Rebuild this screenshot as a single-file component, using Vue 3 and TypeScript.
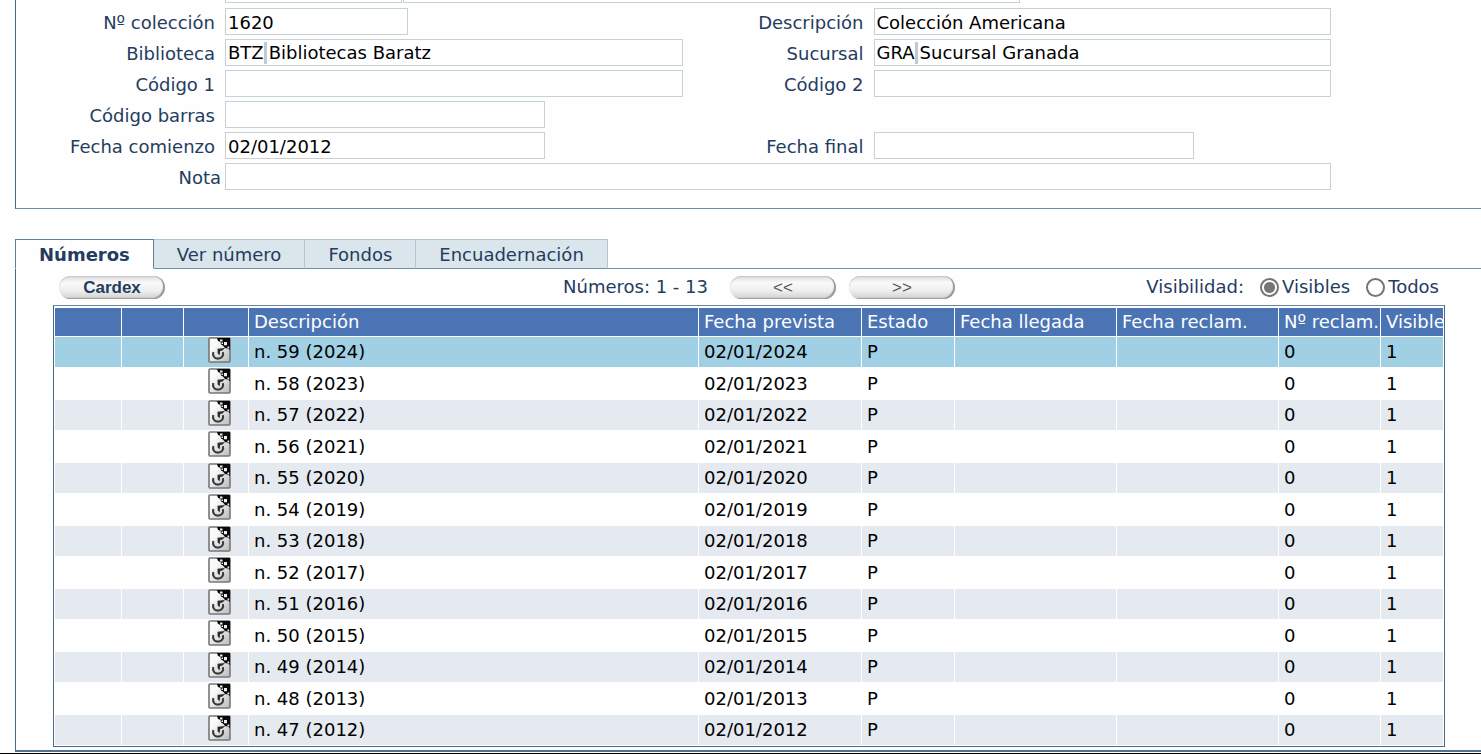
<script setup lang="ts">
import { ref } from 'vue'

interface Issue {
  id: number
  description: string
  expected: string
  status: string
  claims: number
  visible: number
}

const issues: Issue[] = Array.from({ length: 13 }, (_, i) => ({
  id: 59 - i,
  description: `n. ${59 - i} (${2024 - i})`,
  expected: `02/01/${2024 - i}`,
  status: 'P',
  claims: 0,
  visible: 1,
}))

const tabs = ['Números', 'Ver número', 'Fondos', 'Encuadernación']
const activeTab = ref('Números')
const selected = ref(59)
const visibility = ref('visibles')

const collection = ref('1620')
const description = ref('Colección Americana')
const libraryCode = ref('BTZ')
const libraryName = ref('Bibliotecas Baratz')
const branchCode = ref('GRA')
const branchName = ref('Sucursal Granada')
const code1 = ref('')
const code2 = ref('')
const barcode = ref('')
const startDate = ref('02/01/2012')
const endDate = ref('')
const note = ref('')
</script>

<template>
  <main class="page">
    <form class="panel" @submit.prevent>
      <div class="cut-row">
        <input class="cut-code" type="text" aria-label="Código de título" />
        <input class="cut-name" type="text" aria-label="Título" />
      </div>
      <div class="fields">
        <label for="collection">Nº colección</label>
        <input id="collection" v-model="collection" class="box short" type="text" />
        <label for="description">Descripción</label>
        <input id="description" v-model="description" class="box" type="text" />

        <label for="library">Biblioteca</label>
        <div class="box pair">
          <input id="library" v-model="libraryCode" class="code" type="text" />
          <input v-model="libraryName" class="name" type="text" aria-label="Nombre de biblioteca" />
        </div>
        <label for="branch">Sucursal</label>
        <div class="box pair">
          <input id="branch" v-model="branchCode" class="code" type="text" />
          <input v-model="branchName" class="name" type="text" aria-label="Nombre de sucursal" />
        </div>

        <label for="code1">Código 1</label>
        <input id="code1" v-model="code1" class="box" type="text" />
        <label for="code2">Código 2</label>
        <input id="code2" v-model="code2" class="box" type="text" />

        <label for="barcode">Código barras</label>
        <input id="barcode" v-model="barcode" class="box medium" type="text" />

        <label class="first" for="start">Fecha comienzo</label>
        <input id="start" v-model="startDate" class="box medium" type="text" />
        <label for="end">Fecha final</label>
        <input id="end" v-model="endDate" class="box medium" type="text" />

        <label class="tight" for="note">Nota</label>
        <input id="note" v-model="note" class="box wide" type="text" />
      </div>
    </form>

    <nav class="tabs" role="tablist">
      <button
        v-for="tab in tabs"
        :key="tab"
        type="button"
        role="tab"
        class="tab"
        :class="{ active: tab === activeTab }"
        :aria-selected="tab === activeTab"
        @click="activeTab = tab"
      >
        {{ tab }}
      </button>
      <span class="tabs-rest"></span>
    </nav>

    <section class="content">
      <div class="toolbar">
        <div class="side">
          <button type="button" class="pill strong">Cardex</button>
        </div>
        <div class="pager">
          <span class="range">Números: 1 - 13</span>
          <button type="button" class="pill" aria-label="Anteriores">&lt;&lt;</button>
          <button type="button" class="pill" aria-label="Siguientes">&gt;&gt;</button>
        </div>
        <div class="side visibility" role="radiogroup" aria-labelledby="vis-title">
          <span id="vis-title">Visibilidad:</span>
          <label><input v-model="visibility" type="radio" name="vis" value="visibles" />Visibles</label>
          <label><input v-model="visibility" type="radio" name="vis" value="todos" />Todos</label>
        </div>
      </div>

      <table class="grid">
        <colgroup>
          <col class="c-a" /><col class="c-b" /><col class="c-icon" /><col />
          <col class="c-date" /><col class="c-status" /><col class="c-wide" /><col class="c-wide" />
          <col class="c-claims" /><col class="c-visible" />
        </colgroup>
        <thead>
          <tr>
            <th></th>
            <th></th>
            <th></th>
            <th scope="col">Descripción</th>
            <th scope="col">Fecha prevista</th>
            <th scope="col">Estado</th>
            <th scope="col">Fecha llegada</th>
            <th scope="col">Fecha reclam.</th>
            <th scope="col">Nº reclam.</th>
            <th scope="col">Visible</th>
          </tr>
        </thead>
        <tbody>
          <tr v-for="issue in issues" :key="issue.id" :class="{ selected: issue.id === selected }" @click="selected = issue.id">
            <td></td>
            <td></td>
            <td class="icon-cell">
              <button type="button" class="icon" :aria-label="`Recibir ${issue.description}`">
                <svg viewBox="0 0 23 26" width="23" height="26" aria-hidden="true">
                  <defs>
                    <linearGradient :id="`sheet${issue.id}`" x1="0" y1="0" x2="1" y2="1">
                      <stop offset="0.3" stop-color="#fafafa" />
                      <stop offset="1" stop-color="#b9b9b9" />
                    </linearGradient>
                  </defs>
                  <rect x="1" y="1" width="21" height="24" rx="1" :fill="`url(#sheet${issue.id})`" stroke="#777" stroke-width="1.6" />
                  <path d="M9 1H22V13L19.5 11.5L17 11L15 8.5L13 7.5L12.5 5L10 4Z" fill="#080808" />
                  <path d="M12 2.5H14.5V4.5H12ZM16 5H19V8.2H16ZM13.5 5.5H15V7H13.5ZM19.5 9.5H21.2V11.5H19.5Z" fill="#eee" />
                  <path d="M5.3 15C4.3 18.8 6.3 21.6 9.8 21.6C13.8 21.6 16 18.6 14.8 15.2" fill="none" stroke="#3c3c3c" stroke-width="2.1" />
                  <path d="M9.5 11.8L17 11L14.5 13.6L12.2 14L11.6 18.2L9.7 16.4Z" fill="#2b2b2b" />
                </svg>
              </button>
            </td>
            <td>{{ issue.description }}</td>
            <td>{{ issue.expected }}</td>
            <td>{{ issue.status }}</td>
            <td></td>
            <td></td>
            <td>{{ issue.claims }}</td>
            <td>{{ issue.visible }}</td>
          </tr>
        </tbody>
      </table>
    </section>
    <div class="edge"></div>
  </main>
</template>

<style>
body {
  margin: 0;
  background: #fefefe;
}
</style>

<style scoped>
.page {
  font-family: Verdana, 'DejaVu Sans', sans-serif;
  font-size: 18px;
  line-height: 22px;
  color: #243c60;
  overflow: hidden;
}
.page * {
  box-sizing: border-box;
}
input,
button {
  font: inherit;
  margin: 0;
}
.panel {
  margin-left: 15px;
  border-left: 1px solid #466a8c;
  border-bottom: 1px solid #7189a3;
  padding: 0 150px 18px 0;
}
.cut-row {
  display: flex;
  gap: 1px;
  height: 3px;
  margin: 0 311px 5px 209px;
}
.cut-row input {
  height: 3px;
  padding: 0;
  border: 1px solid #c5d0d7;
  border-top: 0;
  background: #fff;
}
.cut-code {
  width: 177px;
}
.cut-name {
  flex: 1;
}
.fields {
  display: grid;
  grid-template-columns: 209px 1fr 191px 1fr;
  grid-auto-rows: 27px;
  row-gap: 4px;
  align-items: center;
}
.fields label {
  text-align: right;
  padding: 2px 10px 0 0;
  white-space: nowrap;
}
.fields .first {
  grid-column: 1;
}
.fields .tight {
  padding-right: 4px;
}
.box {
  width: 100%;
  height: 27px;
  min-width: 0;
  border: 1px solid #c5d0d7;
  background: #fff;
  color: #000;
  padding: 2px 2px 0;
  border-radius: 0;
}
.short {
  width: 40%;
}
.medium {
  width: 70%;
}
.wide {
  grid-column: 2 / -1;
}
.pair {
  display: flex;
  align-items: stretch;
  padding: 2px 2px 1px;
}
.pair input {
  border: 0;
  padding: 0;
  background: none;
  color: #000;
  min-width: 0;
}
.pair .code {
  field-sizing: content;
  max-width: 42px;
  border-right: 3px solid #bccbd5;
}
.pair .name {
  flex: 1;
  padding-left: 2px;
}
.tabs {
  display: flex;
  height: 30px;
  margin: 30px 0 0 15px;
}
.tab {
  padding: 2px 23px 0;
  border: 1px solid #b3c5cf;
  border-left: 0;
  border-bottom-color: #7190ac;
  background: #dbe6ec;
  color: #243c60;
  white-space: nowrap;
}
.tab.active {
  border: 1px solid #5f7f9f;
  border-bottom-color: #fefefe;
  background: #fefefe;
  font-weight: bold;
}
.tabs-rest {
  flex: 1;
  border-bottom: 1px solid #7190ac;
}
.content {
  margin-left: 15px;
  border-left: 1px solid #466a8c;
  border-bottom: 2px solid #55728f;
  padding: 0 36px 3px 37px;
}
.toolbar {
  display: flex;
  align-items: center;
  height: 36px;
  padding: 0 6px;
}
.side {
  flex: 1;
}
.pager {
  display: flex;
  align-items: center;
  gap: 13px;
  margin-left: 20px;
}
.range {
  margin-right: 9px;
}
.visibility {
  display: flex;
  align-items: center;
  justify-content: flex-end;
  gap: 16px;
}
.visibility label {
  display: flex;
  align-items: center;
  gap: 3px;
}
.visibility input {
  appearance: none;
  width: 19px;
  height: 19px;
  border: 2px solid #757575;
  border-radius: 50%;
  background: #fff;
}
.visibility input:checked {
  background: radial-gradient(circle, #757575 5px, #fff 6px);
}
.pill {
  width: 106px;
  height: 23px;
  border: 0;
  border-radius: 12px;
  padding: 0;
  background: linear-gradient(#dcdcdc, #fafafa 30%, #eeeeee 65%, #cfcfcf);
  box-shadow: inset -2px -1px 1px #999, inset 0 1px 1px #c6c6c6;
  color: #555;
  font-family: 'Liberation Sans', Arial, sans-serif;
  font-size: 17px;
  line-height: 23px;
}
.pill.strong {
  color: #243c60;
  font-weight: bold;
}
.grid {
  width: 100%;
  table-layout: fixed;
  border-collapse: separate;
  border-spacing: 0;
  border: 1px solid #466a8c;
  border-top-color: #6887a8;
  background: #fff;
  padding: 2px 0 0 1px;
}
.c-a {
  width: 67px;
}
.c-b {
  width: 62px;
}
.c-icon {
  width: 65px;
}
.c-date {
  width: 163px;
}
.c-wide {
  width: 162px;
}
.c-status {
  width: 93px;
}
.c-claims {
  width: 102px;
}
.c-visible {
  width: 63px;
}
th,
td {
  padding: 0 0 0 5px;
  border-right: 1px solid #fff;
  border-bottom: 1px solid #fff;
  text-align: left;
  font-weight: normal;
  white-space: nowrap;
}
th {
  height: 29px;
  background: #4b74b5;
  color: #fff;
  overflow: hidden;
}
td {
  height: 32px;
  color: #000;
}
tbody tr:nth-child(odd) td {
  height: 31px;
  background: #e4eaf0;
}
tbody tr.selected td {
  background: #a1cfe3;
}
.icon-cell {
  padding: 0 0 0 24px;
  vertical-align: top;
}
.icon {
  display: block;
  width: 23px;
  height: 26px;
  padding: 0;
  border: 0;
  background: none;
}
.icon svg {
  display: block;
}
.edge {
  height: 1px;
  margin-top: 1px;
  background: #000;
}
</style>
